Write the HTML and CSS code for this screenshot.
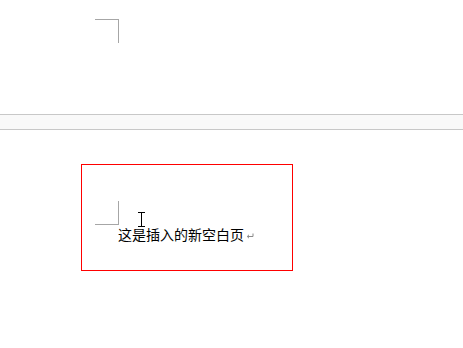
FILE: index.html
```html
<!DOCTYPE html>
<html lang="zh">
<head>
<meta charset="utf-8">
<title>插入空白页</title>
<link rel="stylesheet" href="styles.css">
</head>
<body>
<div class="page page-top">
  <div class="corner corner-tr"></div>
</div>
<div class="page-gap"></div>
<div class="page page-bottom">
  <div class="highlight">
    <div class="corner corner-br"></div>
    <p class="line">这是插入的新空白页<svg class="para" width="8" height="6" viewBox="0 0 8 6"><path d="M7 0.5V3.5H1.5M3 1.8L1.2 3.5L3 5.2" fill="none" stroke="#8a8a8a" stroke-width="1"/></svg></p>
    <svg class="ibeam" width="8" height="16" viewBox="0 0 8 16"><path d="M0 0.5H7M3.5 0.5V14.5M0 14.5H7" fill="none" stroke="#000" stroke-width="1"/></svg>
  </div>
</div>
</body>
</html>
```

FILE: styles.css
```css
html, body {
  margin: 0;
  padding: 0;
  background: #ffffff;
}
body {
  width: 463px;
  height: 348px;
  overflow: hidden;
  font-family: "Noto Sans CJK SC", "Noto Sans", sans-serif;
}
.page {
  background: #ffffff;
}
.page-top {
  height: 114px;
  padding-left: 95px;
  padding-top: 19px;
  box-sizing: border-box;
}
.corner {
  width: 23px;
  height: 23px;
  border-color: #a6a6a6;
  border-style: solid;
  border-width: 0;
}
.corner-tr {
  border-top-width: 1px;
  border-right-width: 1px;
}
.corner-br {
  border-bottom-width: 1px;
  border-right-width: 1px;
  margin-left: 13px;
}
.page-gap {
  height: 14px;
  background: #f9f9f9;
  border-top: 1px solid #c8c8c8;
  border-bottom: 1px solid #c8c8c8;
}
.page-bottom {
  padding-top: 34px;
  padding-left: 81px;
  height: 218px;
  box-sizing: border-box;
}
.highlight {
  position: relative;
  width: 210px;
  height: 105px;
  border: 1px solid #ff0000;
  padding-top: 36px;
  box-sizing: content-box;
  height: 69px;
}
.line {
  margin: 1px 0 0 36px;
  font-size: 14px;
  line-height: 16px;
  color: #000000;
  white-space: nowrap;
  letter-spacing: 0;
}
.para {
  margin-left: 2px;
  vertical-align: 1px;
}
.ibeam {
  position: absolute;
  left: 56px;
  top: 47px;
}
```
